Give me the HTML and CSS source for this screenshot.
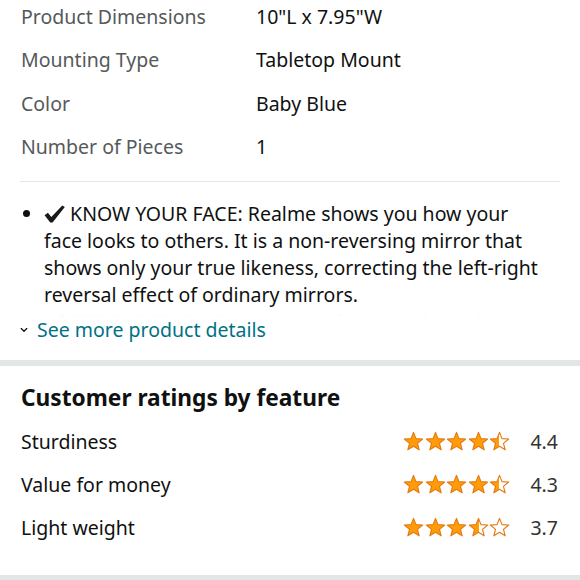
FILE: index.html
```html
<!DOCTYPE html>
<html lang="en">
<head>
<meta charset="utf-8">
<title>Product details</title>
<link rel="stylesheet" href="styles.css">
</head>
<body>
<svg class="defs" aria-hidden="true">
  <defs>
    <linearGradient id="half" x1="0" x2="1" y1="0" y2="0">
      <stop offset="50%" stop-color="#ff9c08"/>
      <stop offset="50%" stop-color="#ffffff"/>
    </linearGradient>
    <polygon id="star" points="12,1.6 14.82,8.72 22.46,9.2 16.56,14.08 18.47,21.5 12,17.4 5.53,21.5 7.44,14.08 1.54,9.2 9.18,8.72"/>
    <polygon id="tick" points="0.6,10.2 3.9,7.7 7.3,12.1 18.3,0.6 20.8,2 8.6,17.6 6.2,17.6"/>
  </defs>
</svg>

<div class="details">
  <div class="row"><span class="label">Product Dimensions</span><span class="value">10"L x 7.95"W</span></div>
  <div class="row"><span class="label">Mounting Type</span><span class="value">Tabletop Mount</span></div>
  <div class="row"><span class="label">Color</span><span class="value">Baby Blue</span></div>
  <div class="row"><span class="label">Number of Pieces</span><span class="value">1</span></div>
</div>
<div class="sep"></div>

<div class="about">
  <div class="bullets-wrap">
    <ul class="bullets">
      <li><svg class="check" viewBox="0 0 21 18"><use href="#tick"/></svg> KNOW YOUR FACE: Realme shows you how your<br>face looks to others. It is a non-reversing mirror that<br>shows only your true likeness, correcting the left-right<br>reversal effect of ordinary mirrors.</li>
      <li class="faded"><svg class="check" viewBox="0 0 21 18"><use href="#tick"/></svg> SEE THE TRUE YOU: see your face as others do</li>
    </ul>
  </div>
  <a class="more" href="#"><span class="chev"><svg viewBox="0 0 10 6"><path d="M1.5 1.2 L5 4.6 L8.5 1.2"/></svg></span>See more product details</a>
</div>

<div class="band"></div>

<section class="ratings">
  <h2>Customer ratings by feature</h2>
  <div class="rrow">
    <span class="feat">Sturdiness</span>
    <span class="stars">
      <svg viewBox="0 0 24 24"><use href="#star" class="full"/></svg><svg viewBox="0 0 24 24"><use href="#star" class="full"/></svg><svg viewBox="0 0 24 24"><use href="#star" class="full"/></svg><svg viewBox="0 0 24 24"><use href="#star" class="full"/></svg><svg viewBox="0 0 24 24"><use href="#star" class="halfs"/></svg>
    </span>
    <span class="num">4.4</span>
  </div>
  <div class="rrow">
    <span class="feat">Value for money</span>
    <span class="stars">
      <svg viewBox="0 0 24 24"><use href="#star" class="full"/></svg><svg viewBox="0 0 24 24"><use href="#star" class="full"/></svg><svg viewBox="0 0 24 24"><use href="#star" class="full"/></svg><svg viewBox="0 0 24 24"><use href="#star" class="full"/></svg><svg viewBox="0 0 24 24"><use href="#star" class="halfs"/></svg>
    </span>
    <span class="num">4.3</span>
  </div>
  <div class="rrow">
    <span class="feat">Light weight</span>
    <span class="stars">
      <svg viewBox="0 0 24 24"><use href="#star" class="full"/></svg><svg viewBox="0 0 24 24"><use href="#star" class="full"/></svg><svg viewBox="0 0 24 24"><use href="#star" class="full"/></svg><svg viewBox="0 0 24 24"><use href="#star" class="halfs"/></svg><svg viewBox="0 0 24 24"><use href="#star" class="empty"/></svg>
    </span>
    <span class="num">3.7</span>
  </div>
</section>

<div class="band"></div>
</body>
</html>
```

FILE: styles.css
```css
* { box-sizing: border-box; }

html, body {
  margin: 0;
  padding: 0;
  background: #ffffff;
}

body {
  font-family: "Noto Sans", "Open Sans", "Liberation Sans", sans-serif;
  font-size: 19.5px;
  color: #0f1111;
  width: 580px;
  overflow: hidden;
}

.defs {
  position: absolute;
  width: 0;
  height: 0;
  overflow: hidden;
}

.details {
  display: flex;
  flex-direction: column;
  gap: 19.3px;
  padding: 5px 20px 22px 21px;
}

.row {
  display: grid;
  grid-template-columns: 235px 1fr;
  line-height: 24px;
}

.label { color: #565959; }
.value { color: #0f1111; }

.sep {
  height: 1px;
  background: #e3e6e6;
  margin: 0 20px;
}

.about {
  padding: 18px 0 18px 0;
}

.bullets-wrap {
  position: relative;
  height: 118px;
  overflow: hidden;
}

.bullets-wrap::after {
  content: "";
  position: absolute;
  left: 0;
  right: 0;
  bottom: 0;
  height: 10px;
  background: linear-gradient(to bottom, rgba(255,255,255,0.85), #ffffff);
}

.bullets {
  margin: 0;
  padding: 0 0 0 44px;
  line-height: 27px;
}

.bullets li {
  margin: 0;
  white-space: nowrap;
}

.bullets li.faded {
  opacity: 0.35;
}

.check {
  width: 21px;
  height: 18px;
  vertical-align: -2px;
  fill: #1a1a1a;
}

.more {
  display: flex;
  align-items: center;
  padding-left: 20px;
  line-height: 24px;
  color: #007185;
  text-decoration: none;
}

.chev {
  display: inline-flex;
  width: 17px;
}

.chev svg {
  width: 8px;
  height: 6px;
}

.chev path {
  fill: none;
  stroke: #0f1111;
  stroke-width: 1.6;
  stroke-linecap: round;
  stroke-linejoin: round;
}

.band {
  height: 6px;
  background: #e3e6e6;
}

.ratings {
  padding: 18px 22px 35px 21px;
}

.ratings h2 {
  margin: 0 0 18px;
  font-size: 22.7px;
  line-height: 28px;
  font-weight: 700;
}

.rrow {
  display: grid;
  grid-template-columns: 1fr auto auto;
  column-gap: 20px;
  align-items: center;
  line-height: 24px;
  margin-bottom: 19px;
}

.rrow:last-child { margin-bottom: 0; }

.stars {
  display: flex;
  gap: 0.5px;
}

.stars svg {
  width: 21px;
  height: 21px;
  display: block;
}

.stars use {
  stroke: #e47911;
  stroke-width: 1.3;
  stroke-linejoin: round;
}

.stars .full { fill: #ff9c08; }
.stars .halfs { fill: url(#half); }
.stars .empty { fill: #ffffff; }

.num {
  color: #333;
}
```
